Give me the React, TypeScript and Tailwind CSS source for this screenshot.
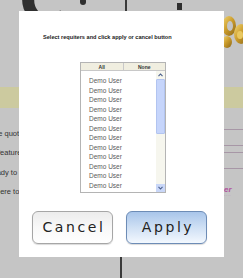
import React from "react";

const USERS = Array.from({ length: 12 }, () => "Demo User");

const LEFT_ROWS = [
  { text: "the quote", shift: "ml-[-8px]" },
  { text: "feature", shift: "ml-[-2px]" },
  { text: "ready to", shift: "ml-[-10px]" },
  { text: "here to", shift: "ml-[-4px]" },
];

function Chevron({ up }: { up?: boolean }) {
  return (
    <svg width="5" height="4" viewBox="0 0 5 4">
      <path
        d={up ? "M0.5 3.2 L2.5 1 L4.5 3.2" : "M0.5 0.8 L2.5 3 L4.5 0.8"}
        fill="none"
        stroke="#4a5f8c"
        strokeWidth="1.1"
      />
    </svg>
  );
}

function Bow() {
  return (
    <svg width="22" height="38" viewBox="0 0 22 38">
      <defs>
        <linearGradient id="gold" x1="0" y1="0" x2="1" y2="1">
          <stop offset="0" stopColor="#f3d774" />
          <stop offset="0.5" stopColor="#c99a2a" />
          <stop offset="1" stopColor="#8a6618" />
        </linearGradient>
      </defs>
      <ellipse cx="8" cy="12" rx="7" ry="10" fill="url(#gold)" />
      <ellipse cx="9" cy="12" rx="3" ry="5" fill="#c4c4c4" />
      <ellipse cx="20" cy="20" rx="7" ry="10" fill="url(#gold)" />
      <ellipse cx="19" cy="21" rx="3" ry="4" fill="#e9c860" />
      <ellipse cx="6" cy="28" rx="5" ry="6" fill="url(#gold)" />
    </svg>
  );
}

export default function App() {
  return (
    <div
      className="relative h-[278px] w-[243px] overflow-hidden bg-[#c5c5c5]"
      style={{ fontFamily: '"Liberation Sans", Arial, sans-serif' }}
    >
      {/* page behind the dialog */}
      <div className="flex h-[87px] items-start">
        <span
          className="ml-[19px] mt-[-30px] text-[62px] font-bold leading-none text-[#2f2f2f]"
          style={{ fontFamily: '"DejaVu Sans", sans-serif' }}
        >
          C
        </span>
        <span className="ml-[15px] mt-[-2px] h-[7px] w-[6px] rounded-full bg-[#2f2f2f]" />
        <span className="ml-[39px] h-[87px] w-[2px] bg-[#3a3a3a]" />
        <span className="ml-[50px] mt-[3px] h-[7px] w-[5px] bg-[#2f2f2f]" />
        <span className="ml-auto mt-[14px]">
          <Bow />
        </span>
      </div>
      <div className="h-[21px] bg-[#ccca9f]" />
      <div className="flex">
        <div className="flex w-[19px] flex-col pt-[16px] text-[7.5px] leading-[19.3px] text-[#333]">
          {LEFT_ROWS.map((r) => (
            <div key={r.text} className={`whitespace-nowrap ${r.shift}`}>
              {r.text}
            </div>
          ))}
        </div>
        <div className="flex-1" />
        <div className="flex w-[19px] flex-col">
          <div className="mt-[21px] h-px bg-[#a797a6]" />
          <div className="mt-[15px] h-px bg-[#a797a6]" />
          <div className="mt-[6px] h-px bg-[#a797a6]" />
          <div className="mt-[15px] h-px bg-[#a797a6]" />
          <div className="mt-[17px] text-[8px] font-bold italic leading-none text-[#b0509c]">
            er
          </div>
          <div className="text-[3px] leading-none tracking-[1px] text-[#b0509c]">
            ....
          </div>
        </div>
      </div>
      <div className="absolute bottom-0 left-[120px] top-[87px] w-[2px] bg-[#3a3a3a]" />

      {/* dialog */}
      <div className="absolute left-[19px] top-[11px] flex h-[246px] w-[205px] flex-col bg-white">
        <div className="mt-[23px] pl-[24px] text-[5.6px] font-bold leading-[7px] text-[#222]">
          Select requiters and click apply or cancel button
        </div>

        <div className="ml-[61px] mt-[21px] flex w-[86px] flex-col border border-[#b4b4b4]">
          <div className="flex h-[8px] border-b border-[#c8c8c8] bg-[#f0eee0] text-[5px] font-bold leading-[8px] text-[#333]">
            <div className="flex-1 border-r border-[#c8c8c8] text-center">All</div>
            <div className="flex-1 text-center">None</div>
          </div>
          <div className="flex h-[121px]">
            <div className="flex-1 overflow-hidden pl-[8px] pt-[5px] text-[6.5px] leading-[9.5px] text-[#5a5a5a]">
              {USERS.map((u, i) => (
                <div key={i}>{u}</div>
              ))}
            </div>
            <div className="flex w-[9px] flex-col bg-[#f6f6ee]">
              <div className="flex h-[8px] items-center justify-center">
                <Chevron up />
              </div>
              <div className="h-[55px] rounded-[1px] border border-[#b2c4f0] bg-[#c6d5fb]" />
              <div className="flex-1" />
              <div className="flex h-[8px] items-center justify-center bg-[#c9d7f8]">
                <Chevron />
              </div>
            </div>
          </div>
        </div>

        <div
          className="ml-[13px] mt-[18px] flex gap-[13px]"
          style={{ fontFamily: '"DejaVu Sans", sans-serif' }}
        >
          <button className="flex h-[33px] w-[81px] items-center justify-center rounded-[6px] border border-[#a6a6a6] bg-gradient-to-b from-[#ececec] via-[#f8f8f8] to-white pl-[3px] text-[14px] tracking-[2.6px] text-[#222] shadow-[0_1px_1px_rgba(0,0,0,0.15)]">
            Cancel
          </button>
          <button className="flex h-[33px] w-[81px] items-center justify-center rounded-[6px] border border-[#6d8cb6] bg-gradient-to-b from-[#a8c5ea] via-[#cfe0f4] to-[#f3f8fe] pl-[3px] text-[14px] tracking-[2.6px] text-[#222] shadow-[0_1px_1px_rgba(0,0,0,0.15)]">
            Apply
          </button>
        </div>
      </div>
    </div>
  );
}
